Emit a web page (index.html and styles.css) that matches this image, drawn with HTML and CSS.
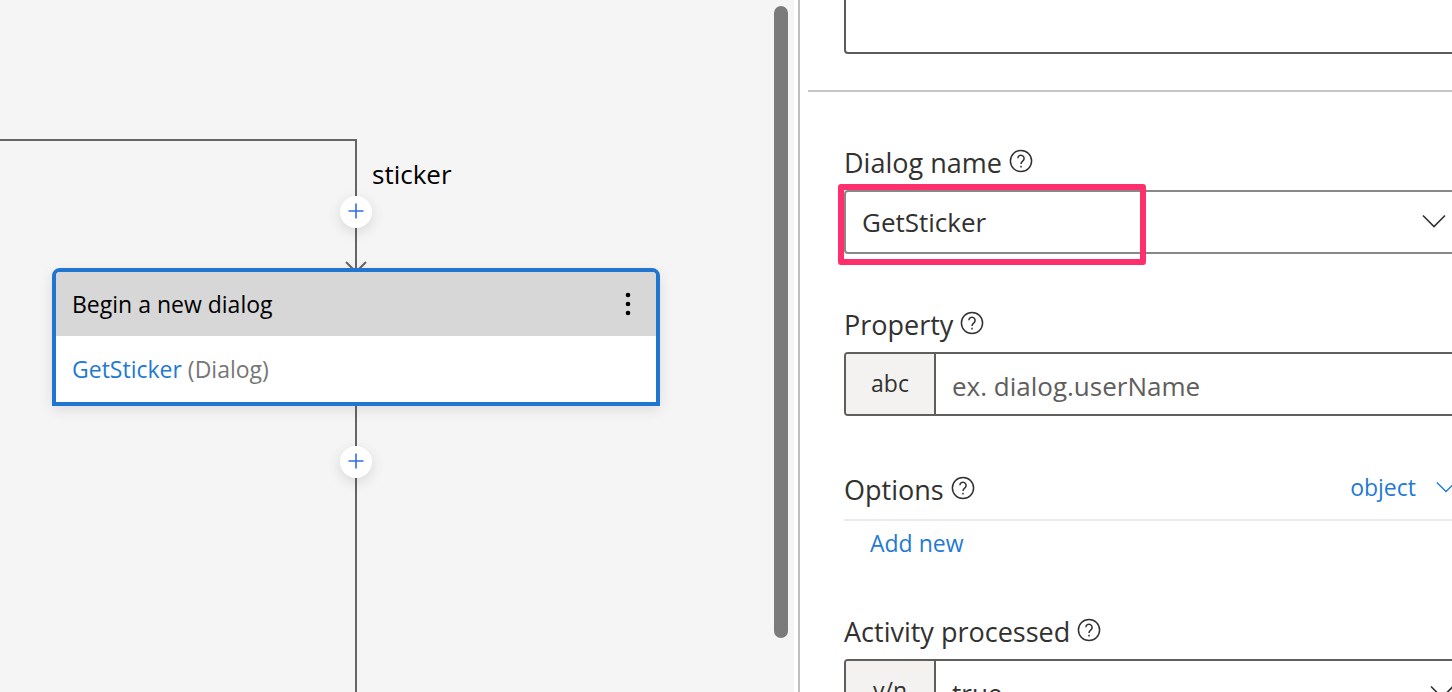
FILE: index.html
```html
<!DOCTYPE html>
<html lang="en">
<head>
<meta charset="utf-8">
<title>Dialog editor</title>
<link rel="stylesheet" href="styles.css">
</head>
<body>
<svg class="defs" aria-hidden="true">
  <symbol id="help" viewBox="0 0 24 24">
    <circle cx="12" cy="12" r="10.6"/>
    <path d="M8.9 9.3a3.1 3.1 0 1 1 5 2.5c-1.2.9-1.9 1.5-1.9 3.2"/>
    <path d="M12 16.7v1.8"/>
  </symbol>
  <symbol id="chevron" viewBox="0 0 24 14"><path d="M1 1.5l11 11 11-11"/></symbol>
  <symbol id="plus" viewBox="0 0 16 16"><path d="M8 .5v15M.5 8h15"/></symbol>
</svg>
<div class="app">
  <main class="canvas">
    <svg class="edges" aria-hidden="true">
      <path d="M0 140H356V700M346 262l10 10 10-10"/>
    </svg>
    <span class="branch">sticker</span>
    <button class="add add-before" aria-label="Add step before"><svg><use href="#plus"/></svg></button>
    <article class="node">
      <header class="node-head">
        <span>Begin a new dialog</span>
        <button class="more" aria-label="More"><svg viewBox="0 0 6 24"><circle cx="3" cy="3" r="2.3"/><circle cx="3" cy="12" r="2.3"/><circle cx="3" cy="21" r="2.3"/></svg></button>
      </header>
      <div class="node-body"><a class="link" href="#">GetSticker</a> (Dialog)</div>
    </article>
    <button class="add add-after" aria-label="Add step after"><svg><use href="#plus"/></svg></button>
    <div class="thumb"></div>
  </main>
  <aside class="panel">
    <textarea class="notes" aria-label="Description"></textarea>
    <hr class="divider">
    <form class="fields">
      <section class="field">
        <div class="caption"><label for="dialog">Dialog name</label><svg class="help"><use href="#help"/></svg></div>
        <div class="picker">
          <select id="dialog" class="select"><option>GetSticker</option></select>
          <svg class="chevron"><use href="#chevron"/></svg>
          <div class="highlight"></div>
        </div>
      </section>
      <section class="field">
        <div class="caption"><label for="property">Property</label><svg class="help"><use href="#help"/></svg></div>
        <div class="typed">
          <span class="type">abc</span>
          <input id="property" class="value" type="text" placeholder="ex. dialog.userName">
        </div>
      </section>
      <section class="field options">
        <div class="options-head">
          <div class="caption"><span>Options</span><svg class="help"><use href="#help"/></svg></div>
          <button type="button" class="kind">object<svg><use href="#chevron"/></svg></button>
        </div>
        <button type="button" class="add-new">Add new</button>
      </section>
      <section class="field">
        <div class="caption"><label for="processed">Activity processed</label><svg class="help"><use href="#help"/></svg></div>
        <div class="typed">
          <span class="type">y/n</span>
          <select id="processed" class="value"><option>true</option></select>
          <svg class="chevron inset"><use href="#chevron"/></svg>
        </div>
      </section>
    </form>
  </aside>
</div>
</body>
</html>
```
FILE: styles.css
```css
* { box-sizing: border-box; }
body { margin: 0; font-family: "Open Sans", "Noto Sans", sans-serif; font-size: 26px; color: #323130; }
button, input, select, textarea { font: inherit; color: inherit; border: 0; margin: 0; padding: 0; background: none; border-radius: 0; }
select { appearance: none; }
svg { fill: none; stroke: currentColor; stroke-width: 2; flex: none; display: block; }
.defs { position: absolute; width: 0; height: 0; }
.app { display: flex; height: 100vh; overflow: hidden; background: #fff; }

.canvas { position: relative; flex: 794 1 0; min-width: 0; background: #f5f5f5; overflow: hidden; font-size: 23px; color: #000; }
.edges { width: 100%; height: 100%; color: #656565; }
.branch { position: absolute; left: 372px; top: 156px; font-size: 26px; line-height: 36px; }
.add { position: absolute; left: 340px; width: 32px; height: 32px; border-radius: 50%; background: #fff; color: #2f6fe4; box-shadow: 0 4px 14px rgba(0, 0, 0, .12); }
.add svg { width: 16px; height: 16px; margin: -2px 0 0 8px; stroke-width: 1.6; }
.add-before { top: 196px; }
.add-after { top: 446px; }
.node { position: absolute; left: 52px; top: 268px; width: 608px; border: 4px solid #1f75d0; border-radius: 8px 8px 0 0; background: #fff; box-shadow: 0 4px 14px rgba(0, 0, 0, .1); }
.node-head { display: flex; align-items: center; justify-content: space-between; height: 64px; padding: 0 25px 0 16px; background: #d7d7d7; border-radius: 4px 4px 0 0; }
.more svg { width: 6px; height: 24px; fill: #000; stroke: none; }
.node-body { padding: 0 16px; line-height: 66px; color: #777; }
.link { color: #1f7ad4; text-decoration: none; }
.thumb { position: absolute; right: 6px; top: 6px; width: 14px; height: 632px; border-radius: 7px; background: #7b7b7b; }

.panel { flex: 652 1 0; min-width: 0; margin-left: 4px; border-left: 2px solid #c0c0c0; overflow: hidden; }
.notes { display: block; width: 100%; height: 60px; margin: -6px 0 0 44px; border: 2px solid #5c5b5a; border-radius: 4px; resize: none; }
.divider { margin: 36px 0 0 8px; border: 0; height: 2px; background: #c6c6c6; }
.fields { padding: 52px 0 0 44px; margin-right: -16px; }
.field { margin-bottom: 52px; }
.caption { display: flex; align-items: center; gap: 7px; height: 36px; margin-bottom: 10px; font-size: 27px; }
.help { width: 24px; height: 24px; margin-bottom: 2px; stroke-width: 1.5; }
.picker { position: relative; }
.select { display: block; width: 100%; height: 64px; padding: 0 16px; border: 2px solid #8a8886; border-radius: 4px; }
.chevron { position: absolute; right: 22px; top: 24px; width: 24px; height: 14px; pointer-events: none; stroke-width: 1.6; }
.inset { right: 12px; }
.highlight { position: absolute; left: -6px; top: -6px; width: 308px; height: 81px; border: 6px solid #ff2e6c; border-radius: 3px; pointer-events: none; }
.typed { position: relative; display: flex; height: 64px; border: 2px solid #605e5c; border-radius: 4px; overflow: hidden; }
.type { flex: none; width: 90px; line-height: 58px; text-align: center; font-size: 23px; background: #f3f2f1; border-right: 2px solid #605e5c; }
.value { flex: 1; min-width: 0; padding: 4px 16px 0; }
.value::placeholder { color: #605e5c; opacity: 1; }
.options { padding-top: 3px; margin-bottom: 54px; }
.options-head { display: flex; justify-content: space-between; align-items: flex-start; height: 50px; padding-right: 16px; border-bottom: 2px solid #eaeaea; }
.kind, .add-new { color: #1f7ad4; font-size: 23px; line-height: 32px; }
.kind { display: flex; align-items: center; gap: 20px; margin-right: -4px; }
.kind svg { width: 20px; height: 12px; stroke-width: 1.6; }
.add-new { display: block; margin: 6px 0 0 26px; }
```
